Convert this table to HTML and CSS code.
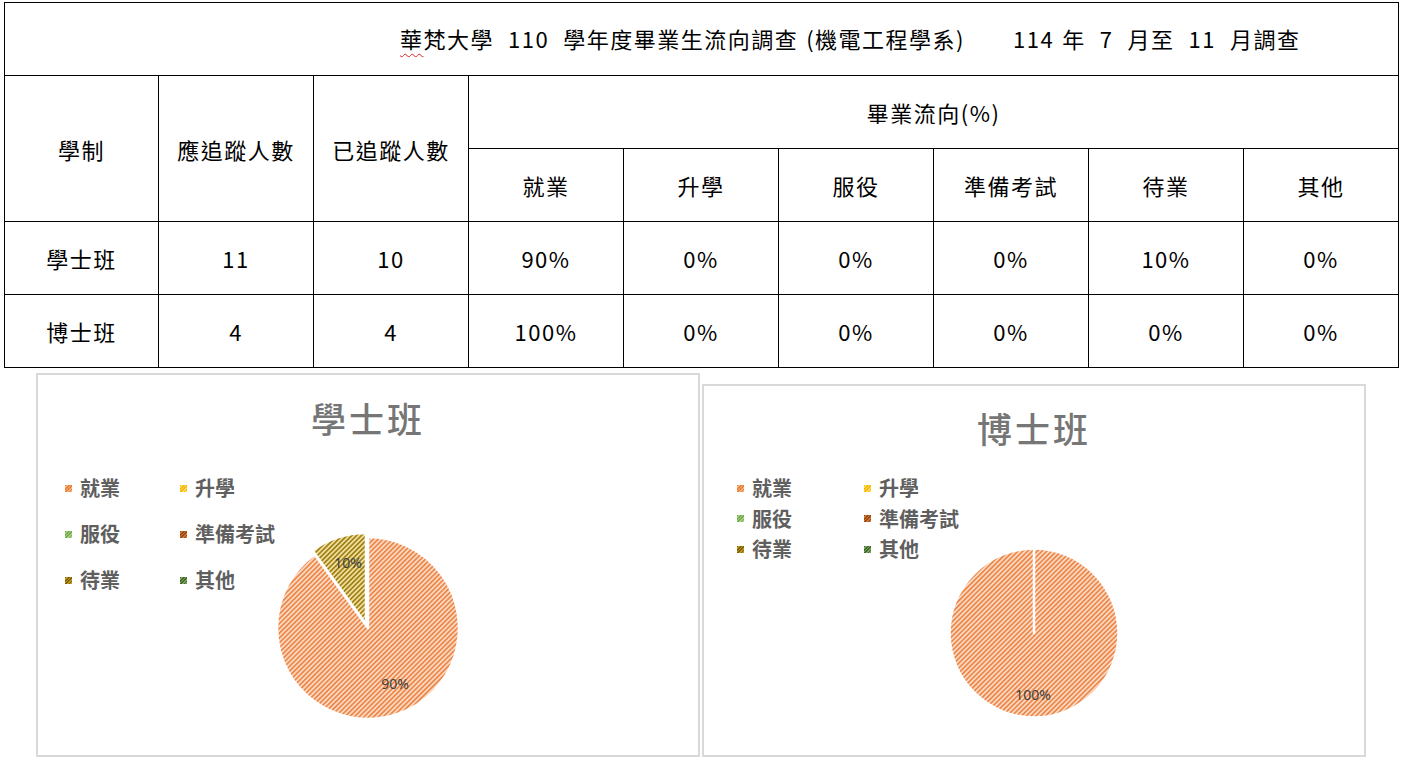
FILE: index.html
```html
<!DOCTYPE html>
<html lang="zh-Hant">
<head>
<meta charset="utf-8">
<title>華梵大學 110 學年度畢業生流向調查</title>
<link rel="stylesheet" href="styles.css">
</head>
<body>
<div class="page">
  <table class="survey">
    <colgroup>
      <col class="c1"><col class="c"><col class="c"><col class="c"><col class="c"><col class="c"><col class="c"><col class="c"><col class="c">
    </colgroup>
    <tr class="row">
      <td colspan="9" class="title"><span class="typo">華</span>梵大學<span class="sp"></span>110<span class="sp"></span>學年度畢業生流向調查<span class="sp2"></span>(機電工程學系)<span class="gap"></span>114<span class="sp2"></span>年<span class="sp"></span>7<span class="sp"></span>月至<span class="sp"></span>11<span class="sp"></span>月調查</td>
    </tr>
    <tr class="row">
      <th rowspan="2">學制</th>
      <th rowspan="2">應追蹤人數</th>
      <th rowspan="2">已追蹤人數</th>
      <th colspan="6">畢業流向(%)</th>
    </tr>
    <tr class="row">
      <th>就業</th><th>升學</th><th>服役</th><th>準備考試</th><th>待業</th><th>其他</th>
    </tr>
    <tr class="row">
      <td>學士班</td><td>11</td><td>10</td><td>90%</td><td>0%</td><td>0%</td><td>0%</td><td>10%</td><td>0%</td>
    </tr>
    <tr class="row">
      <td>博士班</td><td>4</td><td>4</td><td>100%</td><td>0%</td><td>0%</td><td>0%</td><td>0%</td><td>0%</td>
    </tr>
  </table>

  <div class="charts">
    <section class="chart chart-ba">
      <h2 class="chart-title">學士班</h2>
      <div class="plot">
        <ul class="legend">
          <li><i class="mk mk-job"></i>就業</li>
          <li><i class="mk mk-study"></i>升學</li>
          <li><i class="mk mk-army"></i>服役</li>
          <li><i class="mk mk-exam"></i>準備考試</li>
          <li><i class="mk mk-wait"></i>待業</li>
          <li><i class="mk mk-other"></i>其他</li>
        </ul>
        <svg class="pie" width="200" height="200" viewBox="0 0 200 200">
          <defs>
            <pattern id="hatch-job" patternUnits="userSpaceOnUse" width="3.4" height="3.4" patternTransform="rotate(45)">
              <rect width="3.4" height="3.4" fill="#fad9c2"/>
              <rect width="1.6" height="3.4" fill="#ed8343"/>
            </pattern>
            <pattern id="hatch-wait" patternUnits="userSpaceOnUse" width="3.4" height="3.4" patternTransform="rotate(45)">
              <rect width="3.4" height="3.4" fill="#f0df9a"/>
              <rect width="1.6" height="3.4" fill="#9c7c12"/>
            </pattern>
          </defs>
          <path d="M100,100 L100,9 A91,91 0 1 1 46.51,26.38 Z" fill="url(#hatch-job)" stroke="#fff" stroke-width="2.5" stroke-linejoin="round"/>
          <path d="M100,100 L46.51,26.38 A91,91 0 0 1 100,9 Z" transform="translate(-2,-4)" fill="url(#hatch-wait)" stroke="#fff" stroke-width="2.5" stroke-linejoin="round"/>
          <text class="lbl" x="80" y="34">10%</text>
          <text class="lbl" x="127" y="155">90%</text>
        </svg>
      </div>
    </section>

    <section class="chart chart-phd">
      <h2 class="chart-title">博士班</h2>
      <div class="plot">
        <ul class="legend">
          <li><i class="mk mk-job"></i>就業</li>
          <li><i class="mk mk-study"></i>升學</li>
          <li><i class="mk mk-army"></i>服役</li>
          <li><i class="mk mk-exam"></i>準備考試</li>
          <li><i class="mk mk-wait"></i>待業</li>
          <li><i class="mk mk-other"></i>其他</li>
        </ul>
        <svg class="pie" width="200" height="200" viewBox="0 0 200 200">
          <defs>
            <pattern id="hatch-job2" patternUnits="userSpaceOnUse" width="3.4" height="3.4" patternTransform="rotate(45)">
              <rect width="3.4" height="3.4" fill="#fad9c2"/>
              <rect width="1.6" height="3.4" fill="#ed8343"/>
            </pattern>
          </defs>
          <circle cx="100" cy="100" r="84" fill="url(#hatch-job2)" stroke="#fff" stroke-width="1.5"/>
          <line x1="100" y1="101" x2="100" y2="15" stroke="#fff" stroke-width="2.5"/>
          <text class="lbl" x="99" y="161">100%</text>
        </svg>
      </div>
    </section>
  </div>
</div>
</body>
</html>
```

FILE: styles.css
```css
html, body {
  margin: 0;
  padding: 0;
  background: #fff;
}

body {
  font-family: "Noto Sans CJK TC", "Microsoft JhengHei", "Noto Sans", sans-serif;
  color: #000;
}

.page {
  padding: 2px 0 0 4px;
}

.survey {
  border-collapse: collapse;
  table-layout: fixed;
  width: 1394px;
}

.survey col.c1 { width: 154px; }
.survey col.c { width: 155px; }

.survey .row {
  height: 73px;
}

.survey th,
.survey td {
  border: 1px solid #000;
  padding: 0;
  text-align: center;
  vertical-align: middle;
  font-size: 22px;
  letter-spacing: 1.5px;
  font-weight: 400;
  line-height: 28px;
}

.survey td.title {
  text-align: left;
  padding: 0 0 3px 395px;
  white-space: nowrap;
}

.sp { display: inline-block; width: 14px; }
.sp2 { display: inline-block; width: 8px; }

.typo {
  text-decoration: underline wavy #e02020;
  text-decoration-thickness: 1px;
  text-underline-offset: 5px;
}

.gap {
  display: inline-block;
  width: 48px;
}

.charts {
  display: flex;
  align-items: flex-start;
  gap: 2px;
  margin-left: 32px;
  margin-top: 5px;
}

.chart {
  box-sizing: border-box;
  width: 664px;
  border: 2px solid #d9d9d9;
  background: #fff;
}

.chart-ba {
  height: 384px;
}

.chart-phd {
  height: 373px;
  margin-top: 11px;
}

.chart-title {
  margin: 0;
  text-align: center;
  font-size: 35px;
  line-height: 40px;
  font-weight: 500;
  letter-spacing: 3px;
  color: #767676;
}

.chart-ba .chart-title { padding-top: 23px; }
.chart-phd .chart-title { padding-top: 22px; }

.plot {
  display: grid;
  grid-template-columns: minmax(0, 1fr) 200px minmax(0, 1fr);
  align-items: start;
}

.chart-ba .plot { margin-top: 40px; }
.chart-phd .plot { margin-top: 30px; }

.legend {
  list-style: none;
  margin: 0;
  display: grid;
  font-size: 20px;
  line-height: 20px;
  font-weight: 700;
  color: #5f5f5f;
  white-space: nowrap;
}

.chart-ba .legend {
  padding-left: 27px;
  grid-template-columns: 115px auto;
  row-gap: 26px;
}

.chart-phd .legend {
  padding-left: 33px;
  grid-template-columns: 127px auto;
  row-gap: 10.5px;
}

.legend li {
  display: flex;
  align-items: center;
}

.mk {
  display: inline-block;
  width: 7px;
  height: 7px;
  margin-right: 8px;
  flex: none;
}

.mk-job   { background: repeating-linear-gradient(135deg, #ed7d31 0 1.2px, #f4b183 1.2px 2.4px); }
.mk-study { background: repeating-linear-gradient(135deg, #f5b800 0 1.2px, #ffd966 1.2px 2.4px); }
.mk-army  { background: repeating-linear-gradient(135deg, #70ad47 0 1.2px, #a9d18e 1.2px 2.4px); }
.mk-exam  { background: repeating-linear-gradient(135deg, #9e480e 0 1.2px, #c9773d 1.2px 2.4px); }
.mk-wait  { background: repeating-linear-gradient(135deg, #806000 0 1.2px, #bf9a2a 1.2px 2.4px); }
.mk-other { background: repeating-linear-gradient(135deg, #43682b 0 1.2px, #7ea464 1.2px 2.4px); }

.pie {
  display: block;
  overflow: visible;
}

.chart-ba .pie { margin-top: 50px; }
.chart-phd .pie { margin-top: 55px; }

.lbl {
  font-family: "Noto Sans", "Liberation Sans", sans-serif;
  font-size: 14px;
  fill: #404040;
  text-anchor: middle;
  dominant-baseline: central;
}
```
